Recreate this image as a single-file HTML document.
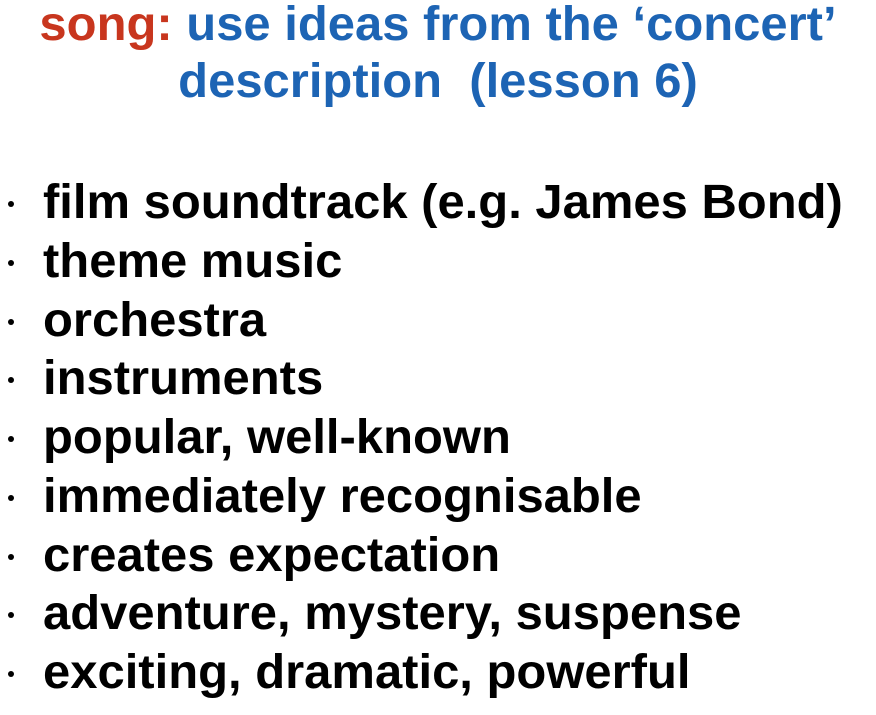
<!DOCTYPE html>
<html><head><meta charset="utf-8"><style>
html,body{margin:0;padding:0;background:#fff;width:876px;height:715px;overflow:hidden}
body{font-family:"Liberation Sans",Arial,sans-serif;font-weight:bold;position:relative}
.t{position:absolute;left:438px;font-size:48px;color:#1d64b4;line-height:1;white-space:nowrap;transform:translateX(-50%) scaleX(1.02)}
.r{color:#c8361e}
.li{position:absolute;left:43px;font-size:48px;color:#000;line-height:1;white-space:nowrap;transform-origin:0 0;transform:scaleX(1.02)}
.b{position:absolute;left:8px;width:6px;height:6px;background:#000;border-radius:50%}
</style></head><body>
<div class="t" style="top:1px"><span class="r">song:</span> use ideas from the ‘concert’</div>
<div class="t" style="top:58px">description&nbsp; (lesson 6)</div>

<div class="b" style="top:201px"></div><div class="li" style="top:179px">film soundtrack (e.g. James Bond)</div>
<div class="b" style="top:260px"></div><div class="li" style="top:238px">theme music</div>
<div class="b" style="top:319px"></div><div class="li" style="top:297px">orchestra</div>
<div class="b" style="top:377px"></div><div class="li" style="top:355px">instruments</div>
<div class="b" style="top:436px"></div><div class="li" style="top:414px">popular, well-known</div>
<div class="b" style="top:495px"></div><div class="li" style="top:473px">immediately recognisable</div>
<div class="b" style="top:554px"></div><div class="li" style="top:532px">creates expectation</div>
<div class="b" style="top:612px"></div><div class="li" style="top:590px">adventure, mystery, suspense</div>
<div class="b" style="top:671px"></div><div class="li" style="top:649px">exciting, dramatic, powerful</div>
</body></html>
